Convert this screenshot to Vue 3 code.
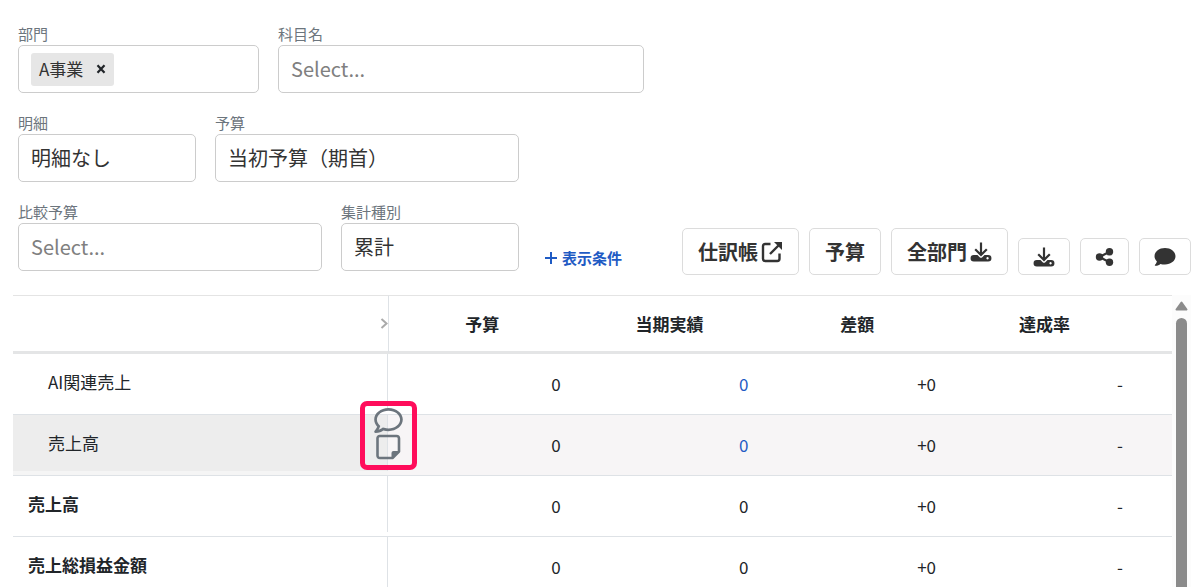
<script setup>
import { ref } from 'vue'

const departments = ref(['A事業'])
const departmentQuery = ref('')
const account = ref('')
const detail = ref('明細なし')
const budget = ref('当初予算（期首）')
const compareBudget = ref('')
const aggregation = ref('累計')

const rows = [
  { id: 1, name: 'AI関連売上', child: true, budget: '0', actual: '0', link: true, diff: '+0', rate: '-' },
  { id: 2, name: '売上高', child: true, budget: '0', actual: '0', link: true, diff: '+0', rate: '-', active: true },
  { id: 3, name: '売上高', budget: '0', actual: '0', diff: '+0', rate: '-' },
  { id: 4, name: '売上総損益金額', budget: '0', actual: '0', diff: '+0', rate: '-' },
]

function removeDepartment(name) {
  departments.value = departments.value.filter((d) => d !== name)
}
</script>

<template>
  <main class="page">
    <form class="filters" @submit.prevent>
      <div class="filter-row">
        <div class="field w-department">
          <label for="department">部門</label>
          <div class="control multi">
            <span v-for="d in departments" :key="d" class="chip">
              {{ d }}
              <button type="button" class="chip-remove" :aria-label="d + 'を削除'" @click="removeDepartment(d)">
                <svg viewBox="0 0 10 10" width="10" height="10"><path d="M1.5 1.2 8.5 8.8M8.5 1.2 1.5 8.8" stroke="currentColor" stroke-width="2.2" /></svg>
              </button>
            </span>
            <input id="department" v-model="departmentQuery" type="text" autocomplete="off" />
          </div>
        </div>
        <div class="field w-account">
          <label for="account">科目名</label>
          <select id="account" v-model="account" class="control" :class="{ empty: !account }">
            <option value="">Select...</option>
          </select>
        </div>
      </div>

      <div class="filter-row">
        <div class="field w-small">
          <label for="detail">明細</label>
          <select id="detail" v-model="detail" class="control">
            <option>明細なし</option>
          </select>
        </div>
        <div class="field w-medium">
          <label for="budget">予算</label>
          <select id="budget" v-model="budget" class="control">
            <option>当初予算（期首）</option>
          </select>
        </div>
      </div>

      <div class="filter-row last">
        <div class="field w-medium">
          <label for="compare">比較予算</label>
          <select id="compare" v-model="compareBudget" class="control" :class="{ empty: !compareBudget }">
            <option value="">Select...</option>
          </select>
        </div>
        <div class="field w-small">
          <label for="aggregation">集計種別</label>
          <select id="aggregation" v-model="aggregation" class="control">
            <option>累計</option>
          </select>
        </div>
        <button type="button" class="conditions">
          <svg viewBox="0 0 14 14" width="14" height="14"><path d="M7 2v12M1 8h12" stroke="currentColor" stroke-width="2" /></svg>
          表示条件
        </button>

        <div class="actions">
          <button type="button" class="btn">
            仕訳帳
            <svg viewBox="0 0 22 22" width="22" height="22" fill="none" stroke="currentColor" stroke-width="2.4">
              <path d="M9.5 3H4.2Q2 3 2 5.200V17.800Q2 20 4.200 20H16.300Q18.500 20 18.500 17.800V12.500" />
              <path d="M9 13 18 4" />
              <path d="M13 1H21V9Z" fill="currentColor" stroke="none" />
            </svg>
          </button>
          <button type="button" class="btn">予算</button>
          <button type="button" class="btn">
            全部門
            <svg viewBox="0 0 22 22" width="22" height="22">
              <path d="M11 1.5V13M5.2 8.2 11 14l5.8-5.8" fill="none" stroke="currentColor" stroke-width="2.2" />
              <path fill="currentColor" fill-rule="evenodd" d="M3.8 14H7.5l2.2 2.2q1.3 1.2 2.6 0L14.500 14H18.200a3.200 3.200 0 0 1 0 6.500H3.800a3.200 3.200 0 0 1 0-6.500ZM17.500 16a1.200 1.200 0 1 0 .1 0Z" />
            </svg>
          </button>
          <button type="button" class="btn icon" aria-label="ダウンロード">
            <svg viewBox="0 0 22 22" width="22" height="22">
              <path d="M11 1.5V13M5.2 8.2 11 14l5.8-5.8" fill="none" stroke="currentColor" stroke-width="2.2" />
              <path fill="currentColor" fill-rule="evenodd" d="M3.8 14H7.5l2.2 2.2q1.3 1.2 2.6 0L14.500 14H18.200a3.200 3.200 0 0 1 0 6.500H3.800a3.200 3.200 0 0 1 0-6.500ZM17.500 16a1.200 1.200 0 1 0 .1 0Z" />
            </svg>
          </button>
          <button type="button" class="btn icon" aria-label="共有">
            <svg viewBox="0 0 19 20" width="19" height="20" fill="currentColor">
              <path d="M14.500 4.800 4.500 10l10 5.200" fill="none" stroke="currentColor" stroke-width="2.200" />
              <circle cx="4.500" cy="10" r="3.700" /><circle cx="14.500" cy="4.800" r="3.700" /><circle cx="14.500" cy="15.200" r="3.700" />
            </svg>
          </button>
          <button type="button" class="btn icon" aria-label="コメント">
            <svg viewBox="0 0 512 512" width="22" height="22" fill="currentColor">
              <path d="M256 48C121 48 12 133 12 240c0 46 22 88 56 122-12 46-45 76-46 78-6 8-3 22 10 22 54 0 94-28 116-46 32 10 68 16 108 16 135 0 244-85 244-192S391 48 256 48z" />
            </svg>
          </button>
        </div>
      </div>
    </form>

    <section class="report">
      <div class="table-wrap">
        <table>
          <colgroup>
            <col class="col-name" />
            <col />
            <col />
            <col />
            <col class="col-rate" />
          </colgroup>
          <thead>
            <tr>
              <td class="corner">
                <button type="button" class="expand" aria-label="列を広げる">
                  <svg viewBox="0 0 8 12" width="8" height="12" fill="none" stroke="currentColor" stroke-width="2"><path d="M1.500 1 6.500 5.500l-5 4.500" /></svg>
                </button>
              </td>
              <th scope="col" class="first-value">予算</th>
              <th scope="col">当期実績</th>
              <th scope="col">差額</th>
              <th scope="col">達成率</th>
            </tr>
          </thead>
          <tbody>
            <tr v-for="row in rows" :key="row.id" :class="{ active: row.active }">
              <th scope="row" :class="{ child: row.child }">
                <div class="name">{{ row.name }}</div>
                <div v-if="row.active" class="row-tools">
                  <button type="button" aria-label="コメントを追加">
                    <svg viewBox="0 32 512 448" width="29" height="25" fill="currentColor">
                      <path d="M256 32C114.600 32 0 125.100 0 240c0 47.600 19.900 91.200 52.900 126.300C38 405.700 7 439.100 6.500 439.500c-6.600 7-8.400 17.200-4.600 26S14.400 480 24 480c61.500 0 110-25.700 139.100-46.300C192 442.800 223.200 448 256 448c141.400 0 256-93.100 256-208S397.400 32 256 32zm0 368c-26.700 0-53.100-4.100-78.400-12.100l-22.700-7.200-19.500 13.800c-14.300 10.100-33.900 21.400-57.500 29 7.300-12.100 14.400-25.700 19.900-40.200l10.600-28.100-20.600-21.800C69.700 314.100 48 282.200 48 240c0-88.200 93.300-160 208-160s208 71.800 208 160-93.300 160-208 160z" />
                    </svg>
                  </button>
                  <button type="button" aria-label="付箋を追加">
                    <svg viewBox="0 0 26 26" width="26" height="26">
                      <path d="M3.500 2H20.500Q23 2 23 4.500V17.500L16.500 24H4Q1.500 24 1.500 21.500V4.500Q1.500 2 4 2Z" fill="none" stroke="currentColor" stroke-width="2.600" stroke-linejoin="round" />
                      <path d="M15.500 25V19Q15.500 17 17.500 17H24Z" fill="currentColor" />
                    </svg>
                  </button>
                </div>
              </th>
              <td>{{ row.budget }}</td>
              <td><a v-if="row.link" href="#">{{ row.actual }}</a><template v-else>{{ row.actual }}</template></td>
              <td>{{ row.diff }}</td>
              <td>{{ row.rate }}</td>
            </tr>
          </tbody>
        </table>
      </div>
      <div class="scrollbar" aria-hidden="true">
        <svg viewBox="0 0 13 10" width="13" height="10"><path d="M6.500 1.500 11.500 8.500H1.500Z" fill="currentColor" stroke="currentColor" stroke-width="2" stroke-linejoin="round" /></svg>
        <div class="thumb"></div>
      </div>
    </section>
  </main>
</template>

<style>
body {
  background: #fff;
}
</style>

<style scoped>
.page,
.page * {
  box-sizing: border-box;
}
.page {
  height: 100vh;
  display: flex;
  flex-direction: column;
  padding: 24px 6px 0 13px;
  overflow: hidden;
  color: #212529;
  font-family: "Noto Sans CJK JP", "Noto Sans", sans-serif;
  font-size: 17px;
}
button,
select,
input {
  font: inherit;
  color: inherit;
  margin: 0;
  padding: 0;
  border: 0;
  background: none;
}
button {
  cursor: pointer;
}
svg {
  display: block;
  flex: none;
}
.filters {
  display: flex;
  flex-direction: column;
  gap: 20px;
  padding: 0 0 20px 5px;
}
.filter-row {
  display: flex;
  gap: 19px;
}
.filter-row.last {
  min-height: 73px;
  align-items: flex-start;
}
.field {
  display: flex;
  flex-direction: column;
  flex: 0 1 auto;
}
.w-department {
  width: 241px;
}
.w-account {
  width: 366px;
}
.w-small {
  width: 178px;
}
.w-medium {
  width: 304px;
}
.field label {
  padding-bottom: 2px;
  color: #6c757d;
  font-size: 15px;
  line-height: 19px;
}
.control {
  width: 100%;
  height: 48px;
  padding: 0 12px 2px;
  border: 1px solid #ccc;
  border-radius: 5px;
  background: #fff;
  color: #333;
  font-size: 20px;
  appearance: none;
}
.control.empty {
  color: #808080;
}
.multi {
  display: flex;
  align-items: center;
  padding-bottom: 0;
}
.multi input {
  flex: 1;
  min-width: 0;
  outline: 0;
}
.chip {
  display: flex;
  align-items: center;
  gap: 5px;
  height: 33px;
  padding-left: 8px;
  border-radius: 3px;
  background: #e6e6e6;
  font-size: 17px;
  line-height: 31px;
  align-items: flex-start;
  white-space: nowrap;
}
.chip-remove {
  display: flex;
  align-items: center;
  height: 33px;
  padding: 0 8px;
  color: #212529;
}
.conditions {
  display: flex;
  align-items: center;
  gap: 4px;
  height: 26px;
  margin-top: 42px;
  padding-left: 6px;
  color: #1f5bc4;
  font-size: 15px;
  font-weight: 700;
  white-space: nowrap;
}
.actions {
  display: flex;
  align-items: flex-end;
  align-self: flex-end;
  gap: 10px;
  margin-left: auto;
}
.btn {
  display: flex;
  align-items: center;
  gap: 3px;
  height: 47px;
  padding: 0 15px;
  border: 1px solid #dcdcdc;
  border-radius: 5px;
  background: #fff;
  color: #333;
  font-size: 20px;
  font-weight: 700;
  white-space: nowrap;
}
.btn.icon {
  height: 37px;
  padding: 0 14px;
}
.report {
  flex: 1;
  min-height: 0;
  display: flex;
}
.table-wrap {
  flex: 1;
  overflow: hidden;
}
table {
  width: 100%;
  table-layout: fixed;
  border-collapse: separate;
  border-spacing: 0;
  line-height: 24px;
}
.col-name {
  width: 375px;
}
.col-rate {
  width: 221px;
}
thead th,
thead td {
  height: 59px;
  padding: 0;
  border-top: 1px solid #e4e4e4;
  border-bottom: 3px solid #e4e5e6;
  text-align: center;
  font-weight: 700;
}
thead th.first-value {
  border-left: 1px solid #dee2e6;
}
thead th:last-child {
  padding-right: 34px;
}
.expand {
  display: block;
  margin-left: auto;
  color: #aaa;
}
tbody th,
tbody td {
  height: 61px;
  padding: 0 15px 0 0;
  border-bottom: 1px solid #dee2e6;
  text-align: right;
}
tbody td:last-child {
  padding-right: 49px;
}
tbody th {
  position: relative;
  padding: 0;
  vertical-align: top;
  text-align: left;
}
.name {
  height: 56px;
  padding-left: 15px;
  border-right: 1px solid #dee2e6;
  line-height: 56px;
}
.child .name {
  padding-left: 35px;
  font-weight: 400;
}
tbody a {
  color: #1f5bc4;
  text-decoration: none;
}
.active td {
  background: #f7f5f6;
}
.active th {
  background: #f5f5f5;
}
.active .name {
  background: #ededed;
}
.row-tools {
  position: absolute;
  z-index: 1;
  top: -14px;
  right: -29px;
  width: 57px;
  height: 69px;
  display: flex;
  flex-direction: column;
  align-items: center;
  gap: 1px;
  padding-top: 2px;
  border: 5px solid #ff0d5b;
  border-radius: 7px;
  color: #6c757d;
}
.scrollbar {
  width: 19px;
  display: flex;
  flex-direction: column;
  align-items: center;
  gap: 7px;
  padding-top: 6px;
  background: #fcfcfc;
  color: #8b8b8b;
}
.thumb {
  flex: 1;
  width: 11px;
  border-radius: 6px 6px 0 0;
  background: #8b8b8b;
}
</style>
